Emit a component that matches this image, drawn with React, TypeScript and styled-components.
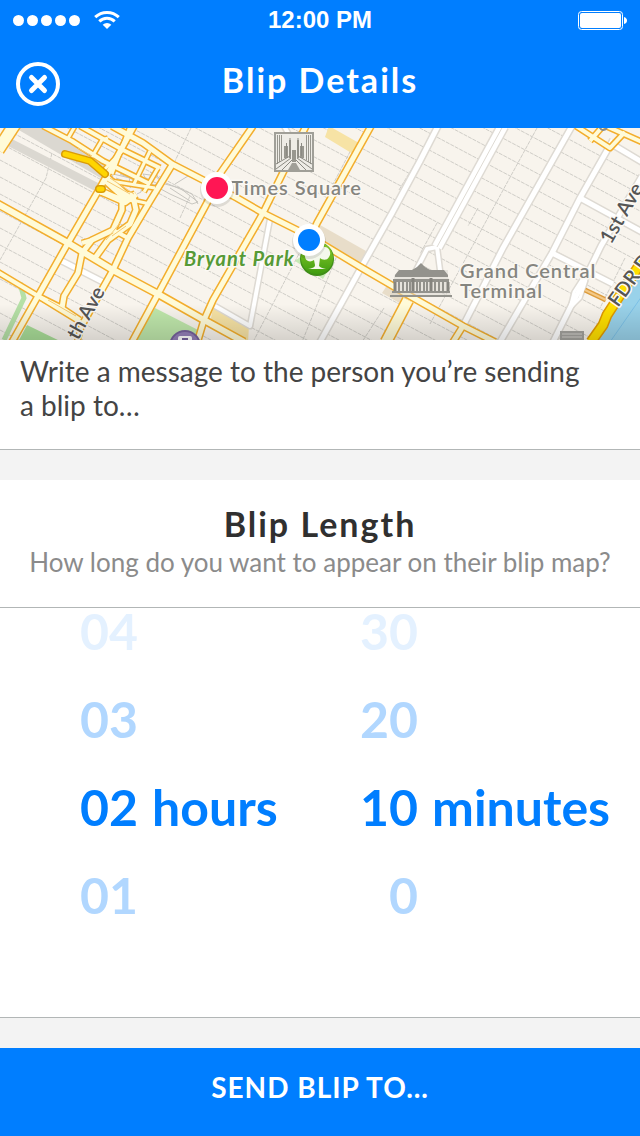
import React, { useState } from "react";
import styled, { createGlobalStyle } from "styled-components";

const blue = "#007eff";
const rule = "#b2b6b6";

const GlobalStyle = createGlobalStyle`
  *, *::before, *::after { box-sizing: border-box; }
  body { margin: 0; background: #f3f3f3; }
  body, button, textarea, input { font-family: Lato, "Liberation Sans", sans-serif; }
`;

const Screen = styled.div`
  display: flex;
  flex-direction: column;
  min-height: 100vh;
  background: #f3f3f3;
`;

const Header = styled.header`
  background: ${blue};
  color: #fff;
`;

const StatusBar = styled.div`
  display: grid;
  grid-template-columns: 1fr auto 1fr;
  align-items: center;
  height: 40px;
  padding: 0 13px;
`;

const Signal = styled.div`
  display: flex;
  align-items: center;
  gap: 14px;
`;

const Clock = styled.time`
  font: 700 24px/40px "Liberation Sans", sans-serif;
`;

const Battery = styled.svg`
  justify-self: end;
`;

const NavBar = styled.div`
  display: grid;
  grid-template-columns: 44px 1fr 44px;
  align-items: center;
  height: 88px;
  padding: 0 16px;
`;

const CloseButton = styled.button`
  display: block;
  width: 44px;
  height: 44px;
  padding: 0;
  border: 0;
  background: none;
  color: inherit;
`;

const Title = styled.h1`
  margin: 0;
  padding-bottom: 8px;
  font-size: 34px;
  font-weight: 700;
  line-height: 40px;
  letter-spacing: 2px;
  text-align: center;
`;

const Main = styled.main`
  display: flex;
  flex: 1;
  flex-direction: column;
`;

const MapView = styled.svg`
  display: block;
  width: 100%;
  height: 212px;
  background: #f8f4ed;
`;

const Message = styled.textarea`
  display: block;
  width: 100%;
  height: 110px;
  padding: 14px 60px 14px 20px;
  border: 0;
  border-bottom: 1px solid ${rule};
  border-radius: 0;
  outline: 0;
  resize: none;
  background: #fff;
  color: #444;
  font-size: 28px;
  line-height: 34px;

  &::placeholder { color: #444; opacity: 1; }
`;

const LengthPanel = styled.section`
  display: flex;
  flex: 1;
  flex-direction: column;
  margin: 30px 0;
  border-bottom: 1px solid ${rule};
  background: #fff;
`;

const PanelHead = styled.div`
  padding: 24px 16px 27px;
  border-bottom: 1px solid ${rule};
  text-align: center;
`;

const PanelTitle = styled.h2`
  margin: 0;
  color: #303030;
  font-size: 34px;
  font-weight: 700;
  line-height: 40px;
  letter-spacing: 2px;
`;

const PanelHint = styled.p`
  margin: 0;
  color: #8b8b8b;
  font-size: 26px;
  line-height: 36px;
`;

const Picker = styled.div`
  display: grid;
  grid-template-columns: 1fr 1fr;
  padding-left: 80px;
`;

const Wheel = styled.fieldset`
  display: flex;
  flex-direction: column;
  gap: 44px;
  min-width: 0;
  margin: 0;
  padding: 0;
  border: 0;
`;

const Option = styled.label<{ $distance: number }>`
  display: flex;
  gap: 14px;
  height: 44px;
  color: ${blue};
  font-size: 50px;
  font-weight: 700;
  line-height: 46px;
  white-space: nowrap;
  cursor: pointer;
  opacity: ${(p) => [1, 0.3, 0.1][Math.min(p.$distance, 2)]};
`;

const Radio = styled.input`
  position: absolute;
  width: 1px;
  height: 1px;
  margin: 0;
  appearance: none;
`;

const Digits = styled.span`
  width: 58px;
  text-align: right;
`;

const SendButton = styled.button`
  display: block;
  width: 100%;
  height: 88px;
  padding: 0 16px 11px;
  border: 0;
  background: ${blue};
  color: #fff;
  font-size: 28px;
  font-weight: 700;
  letter-spacing: 1px;
`;

const MapLabel = styled.text`
  font-family: Lato, sans-serif;
  font-size: 20px;
  font-weight: 600;
  letter-spacing: 1px;
  fill: #85857f;
  stroke: #fbf8f3;
  stroke-width: 3px;
  stroke-linejoin: round;
  paint-order: stroke;
`;

const ParkLabel = styled(MapLabel)`
  font-style: italic;
  font-weight: 700;
  fill: #569a36;
`;

const StreetLabel = styled(MapLabel)`
  letter-spacing: 0;
  fill: #555;
`;

type Road = { d: string; w: number };

const yellowRoads: Road[] = [
  { d: "M-4 75L68 115L113 142L158 166L204 192L244 214", w: 7 },
  { d: "M-4 143L38 168L82 195", w: 5 },
  { d: "M-2 22L15 -4", w: 12 },
  { d: "M12 214L38 168L68 115L100 60L134 -2", w: 6 },
  { d: "M77 214L82 197", w: 5 },
  { d: "M82 197L113 142L128 110L150 73L172 37", w: 6 },
  { d: "M132 214L158 166L208 73L217 50L253 -2", w: 6 },
  { d: "M198 212L204 192L213 172L263 85L306 -2", w: 6 },
  { d: "M309 112L317 95L371 -2", w: 6 },
  { d: "M43 -2L72 13L103 33L150 56", w: 5 },
  { d: "M80 -2L123 22L160 40", w: 5 },
  { d: "M112 -2L143 15L172 36L203 52L237 70L263 85L309 108L362 140L410 168L463 198L495 214", w: 6 },
  { d: "M67 12L75 -2M92 29L102 12L108 10M103 43L123 22M112 46L130 -2M134 56L150 23M144 64L158 40", w: 4 },
  { d: "M100 65L150 76M104 52L155 60", w: 4 },
  { d: "M386 214L408 172", w: 11 },
  { d: "M453 214L463 198", w: 6 },
  { d: "M576 -2L610 20L625 4M590 13L603 -2M606 -2L642 14", w: 5 },
  { d: "M105 50L125 68L134 70", w: 10 },
  { d: "M100 63L125 74L136 66", w: 7 },
  { d: "M122 72L122 82L113 102L92 112L82 125L78 145L64 168L62 180", w: 6 },
  { d: "M133 68L136 82L130 96L108 112L95 130", w: 6 },
  { d: "M38 168L62 180L80 192M113 102L128 110M82 115L92 112", w: 5 },
];

const whiteRoads: Road[] = [
  { d: "M270 91L250 198L215 178", w: 5 },
  { d: "M284 -2L292 12", w: 5 },
  { d: "M320 214L362 138L392 85L420 33L438 -2", w: 6 },
  { d: "M437 119L503 -2", w: 11 },
  { d: "M437 119L427 121L412 150M437 119L440 142L437 152", w: 5 },
  { d: "M463 198L503 120L572 -2", w: 6 },
  { d: "M500 214L552 125L580 70L613 12", w: 6 },
  { d: "M580 70L642 104M552 125L613 156M610 15L642 34", w: 6 },
  { d: "M553 214L570 180L583 155L601 118L642 48", w: 6 },
  { d: "M570 180L574 164L583 150M570 180L580 170L586 152", w: 4 },
  { d: "M62 133L103 154", w: 6 },
];

const crossStreets = Array.from({ length: 34 }, (_, i) => -342 + i * 17)
  .map((y) => `M0 ${y}L640 ${y + 340}`)
  .join("");

const minorAvenues =
  "M191 0L175 33M46 50L0 132M52 25L46 50M253 214L302 120M340 120L302 214M399 62L438 -2M330 62L352 20M537 0L478 108L430 196M437 95L420 126M478 80L468 98M384 180L362 214M180 90L190 68M625 130L600 180";

const Roads = ({ roads, edge, fill }: { roads: Road[]; edge: string; fill: string }) => (
  <g fill="none" strokeLinejoin="round">
    {roads.map((r) => (
      <path key={r.d} d={r.d} stroke={edge} strokeWidth={r.w + 2} />
    ))}
    {roads.map((r) => (
      <path key={r.d} d={r.d} stroke={fill} strokeWidth={r.w - 1} />
    ))}
  </g>
);

const Pin = ({ x, y, color }: { x: number; y: number; color: string }) => (
  <g>
    <circle cx={x} cy={y + 2} r="17" fill="#000" opacity=".1" />
    <circle cx={x} cy={y} r="16" fill="#fff" />
    <circle cx={x} cy={y} r="11" fill={color} />
  </g>
);

const CityMap = () => (
  <MapView viewBox="0 0 640 212" preserveAspectRatio="xMidYMid slice" role="img" aria-label="Map of Midtown Manhattan">
    <defs>
      <linearGradient id="shade" x1="0" y1="0" x2="0" y2="1">
        <stop offset="0" stopColor="#000" stopOpacity="0" />
        <stop offset="1" stopColor="#000" stopOpacity=".14" />
      </linearGradient>
      <linearGradient id="park" x1="0" y1="0" x2="0" y2="1">
        <stop offset="0" stopColor="#8fce2c" />
        <stop offset="1" stopColor="#3f9c10" />
      </linearGradient>
    </defs>
    <rect width="640" height="212" fill="#f8f4ed" />
    <path d={crossStreets + minorAvenues} stroke="#cfcdc7" fill="none" strokeDasharray="4 1" />
    <path d="M12 -2L46 -2L112 42L104 52Z M10 10L102 57L97 64L8 18Z" fill="#dbd8d1" />
    <path d="M155 180L202 204L198 214L134 214Z" fill="#bfe7ab" />
    <path d="M27 197L62 214L18 214Z" fill="#a9dd98" />
    <path d="M20 155L24 170L4 212" stroke="#b5e0a6" strokeWidth="5" fill="none" />
    <path d="M329 -2L359 15L353 26L325 9Z M213 180L249 198L248 214L210 195Z" fill="#f7e3a5" />
    <path d="M320 97L366 123L361 135L312 108Z M388 156L410 168L403 177L382 165Z" fill="#e8ddc9" />
    <path d="M295 133L312 120L334 132L323 151Z" fill="#c6e9b5" />
    <g fill="none" stroke="#c8c6c0">
      <path d="M113 46L130 50L128 58L112 52ZM120 46L134 52L130 60M138 60L142 56L141 64L137 66M143 46L157 48L165 56L180 60L198 74L192 76L170 66L148 54ZM166 55L192 66L198 76M150 44L160 52" />
      <path d="M116 50L132 56M146 50L158 56L150 58M170 60L190 73M175 56L188 48L204 52" />
    </g>
    <Roads roads={whiteRoads} edge="#dedad3" fill="#fff" />
    <path d="M437 119L503 -2" stroke="#dedad3" />
    <Roads roads={yellowRoads} edge="#f3ae2d" fill="#fffbd8" />
    <g fill="none" stroke="#f6c870">
      <path d="M107 53L130 66M110 50L134 66M76 34L90 26M78 20L92 28M120 95L106 112M126 98L112 108M48 172L76 188" />
    </g>
    <g fill="none" strokeLinecap="round" strokeLinejoin="round">
      <path d="M65 26L90 33L105 46M99 61L102 61" stroke="#d99c08" strokeWidth="8" />
      <path d="M65 26L90 33L105 46M99 61L102 61" stroke="#ffd500" strokeWidth="5" />
    </g>
    <path d="M642 128L603 188L594 214L642 214Z" fill="#99d2ea" />
    <path d="M642 168L610 214" stroke="#7cc0e6" />
    <path d="M585 162L606 172" stroke="#dd9c3c" strokeWidth="5" />
    <path d="M585 162L606 172" stroke="#f3c987" strokeWidth="2" />
    <path d="M644 130L607 187L603 197L591 214" stroke="#e09b00" strokeWidth="11" fill="none" />
    <path d="M644 130L607 187L603 197L591 214" stroke="#ffdf00" strokeWidth="8" fill="none" />

    <g>
      <rect x="274" y="4" width="40" height="40" fill="#a09f98" />
      <rect x="276" y="6" width="36" height="36" fill="#eeece6" />
      <path d="M284 18H288V30H284ZM300 18H304V30H300ZM289 12H291V30H289ZM297 12H299V30H297ZM292 22H296V34H292Z" fill="#98978f" />
      <path d="M277.500 7V36M279.500 7V34M281.500 7V32M306.500 7V32M308.500 7V34M310.500 7V36" stroke="#98978f" />
      <path d="M286.500 15V28M301.500 15V28M290 10V28M298 10V28M276 36L290 28M276 41L291 30M282 42L292 32M298 28L312 36M297 30L312 41M296 32L306 42" stroke="#8b8a83" fill="none" />
      <path d="M288 42L292 35H296L300 42Z" fill="#a09f98" />
      <rect x="275" y="5" width="38" height="38" fill="none" stroke="#a09f98" strokeWidth="2" />
    </g>

    <g>
      <circle cx="317" cy="131" r="17" fill="#3f8e18" />
      <circle cx="317" cy="130" r="16" fill="url(#park)" />
      <path d="M305 128C302 120 309 117 312 119C314 114 323 114 324 119C329 118 332 125 329 129C327 133 322 132 320 130L319 138C321 140 323 140 326 141H308C312 140 315 140 315 137L314 132C310 135 305 133 305 128Z" fill="#f4f8ec" />
    </g>

    <g>
      <path d="M394 148L399 142H448V165H394Z" fill="#e6e3dc" />
      <path d="M395 147L399 142H412L417 139L421 135L425 139L430 142H444L448 147V149H395Z" fill="#93928c" />
      <path d="M393 151H449V154H393ZM392 163H450V165H392ZM390 167H452V169H390Z" fill="#93928c" />
      <path d="M395 154V163M448 154V163M413 150V163M431 150V163" stroke="#85847e" strokeWidth="3" />
      <path d="M399 154V163M403 154V163M407 154V163M410 154V163M417 154V163M420 154V163M424 154V163M427 154V163M435 154V163M439 154V163M443 154V163" stroke="#93928c" strokeWidth="2" />
      <path d="M391 166H451" stroke="#d8d5ce" />
    </g>
    <path d="M560 203H584V214H560Z" fill="#a3a29d" />
    <path d="M562 206H582M562 209H582" stroke="#d5d3ce" />

    <circle cx="185" cy="218" r="16" fill="#75609b" />
    <circle cx="185" cy="218" r="14" fill="#9480b8" />
    <rect x="178" y="208" width="14" height="12" rx="2" fill="#fff" />
    <path d="M182 211H188" stroke="#75609b" strokeWidth="2" />

    <MapLabel x="231" y="67">Times Square</MapLabel>
    <MapLabel x="460" y="150">Grand Central</MapLabel>
    <MapLabel x="460" y="170">Terminal</MapLabel>
    <ParkLabel x="184" y="138">Bryant Park</ParkLabel>
    <StreetLabel transform="translate(78 213) rotate(-61)">th Ave</StreetLabel>
    <StreetLabel transform="translate(611 117) rotate(-60)">1st Ave</StreetLabel>
    <StreetLabel transform="translate(618 180) rotate(-54)">FDR Dr</StreetLabel>
    <path d="M599 -2Q602 5 607 0" stroke="#8d8d88" strokeWidth="2" fill="none" />

    <rect y="176" width="640" height="36" fill="url(#shade)" />
    <Pin x={217} y={60} color="#ff1654" />
    <Pin x={309} y={112} color={blue} />
  </MapView>
);

type WheelProps = { name: string; unit: string; values: string[]; initial: number };

const NumberWheel = ({ name, unit, values, initial }: WheelProps) => {
  const [selected, setSelected] = useState(initial);
  return (
    <Wheel aria-label={unit}>
      {values.map((value, i) => (
        <Option key={value} $distance={Math.abs(i - selected)}>
          <Radio type="radio" name={name} value={value} checked={i === selected} onChange={() => setSelected(i)} />
          <Digits>{value}</Digits>
          {i === selected && <span>{unit}</span>}
        </Option>
      ))}
    </Wheel>
  );
};

export default function App() {
  return (
    <Screen>
      <GlobalStyle />
      <Header>
        <StatusBar>
          <Signal>
            <svg width="67" height="12" viewBox="0 0 67 12" fill="#fff" aria-hidden="true">
              {[0, 1, 2, 3, 4].map((i) => (
                <circle key={i} cx={5.5 + i * 14} cy="6.5" r="5.5" />
              ))}
            </svg>
            <svg width="26" height="20" viewBox="0 0 26 20" fill="none" stroke="#fff" strokeWidth="3" aria-hidden="true">
              <path d="M1.2 7.2A17 17 0 0 1 24.800 7.200" />
              <path d="M5.300 11.400A11 11 0 0 1 20.700 11.400" />
              <path d="M13 19L8.700 14.700A6.200 6.200 0 0 1 17.300 14.700Z" fill="#fff" stroke="none" />
            </svg>
          </Signal>
          <Clock>12:00 PM</Clock>
          <Battery width="49" height="20" viewBox="0 0 49 20" aria-hidden="true">
            <rect x=".5" y="1.500" width="44" height="18" rx="3" fill="none" stroke="#fff" />
            <rect x="2" y="3" width="41" height="15" rx="2" fill="#fff" />
            <path d="M46 7Q49 8 49 10.500Q49 13 46 14Z" fill="#fff" />
          </Battery>
        </StatusBar>
        <NavBar>
          <CloseButton type="button" aria-label="Close">
            <svg width="44" height="44" viewBox="0 0 44 44" fill="none" stroke="currentColor" aria-hidden="true">
              <circle cx="22" cy="22" r="20" strokeWidth="4" />
              <path d="M15.500 15.500L28.500 28.500M28.500 15.500L15.500 28.500" strokeWidth="5" strokeLinecap="round" />
            </svg>
          </CloseButton>
          <Title>Blip Details</Title>
        </NavBar>
      </Header>
      <Main>
        <CityMap />
        <Message aria-label="Message" placeholder="Write a message to the person you’re sending a blip to…" />
        <LengthPanel>
          <PanelHead>
            <PanelTitle>Blip Length</PanelTitle>
            <PanelHint>How long do you want to appear on their blip map?</PanelHint>
          </PanelHead>
          <Picker>
            <NumberWheel name="hours" unit="hours" values={["04", "03", "02", "01"]} initial={2} />
            <NumberWheel name="minutes" unit="minutes" values={["30", "20", "10", "0"]} initial={2} />
          </Picker>
        </LengthPanel>
      </Main>
      <SendButton type="button">SEND BLIP TO…</SendButton>
    </Screen>
  );
}
